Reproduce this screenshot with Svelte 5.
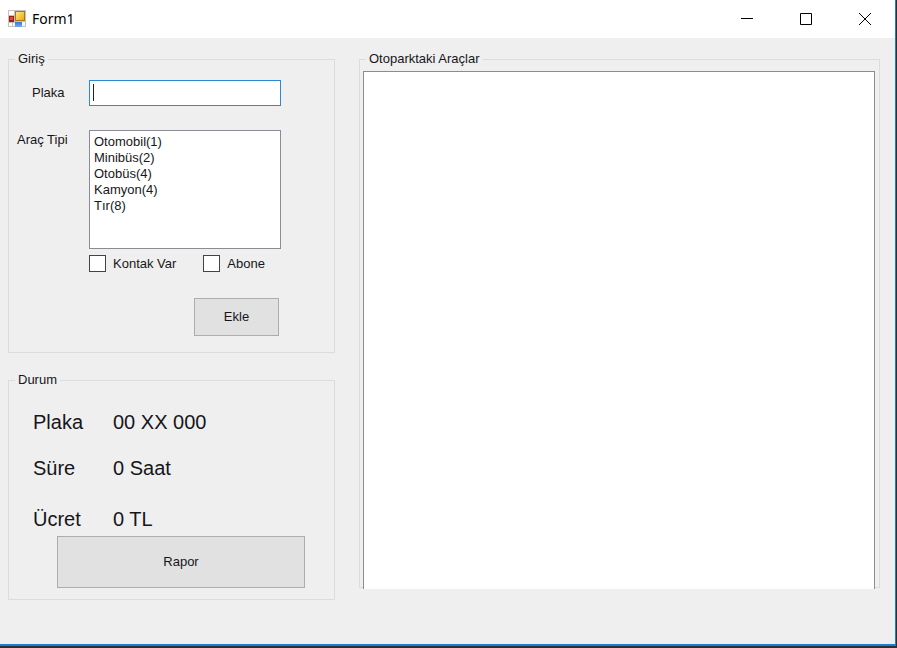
<script>
  const vehicleTypes = ['Otomobil(1)', 'Minibüs(2)', 'Otobüs(4)', 'Kamyon(4)', 'Tır(8)'];
  const status = [
    { name: 'Plaka', value: '00 XX 000' },
    { name: 'Süre', value: '0 Saat' },
    { name: 'Ücret', value: '0 TL' }
  ];
  let plate = $state('');
  let ignition = $state(false);
  let subscriber = $state(false);
</script>

<div class="window">
  <header>
    <svg class="logo" viewBox="0 0 18 18" aria-hidden="true">
      <defs>
        <linearGradient id="gold" x1="0" y1="0" x2="1" y2="1">
          <stop offset="0" stop-color="#ffe58a" />
          <stop offset="1" stop-color="#efac00" />
        </linearGradient>
        <linearGradient id="blue" x1="0" y1="0" x2="0" y2="1">
          <stop offset="0" stop-color="#3c74d8" />
          <stop offset="1" stop-color="#79a9f5" />
        </linearGradient>
      </defs>
      <rect x="0" y="0" width="18" height="17" fill="#c6c3be" />
      <rect x="1" y="1" width="5" height="4" fill="#fff" />
      <rect x="1" y="13" width="3" height="3" fill="#fff" />
      <rect x="5" y="13" width="2" height="3" fill="#f5f5f5" />
      <rect x="14" y="12" width="3" height="4" fill="#f5f5f5" />
      <rect x="7" y="1" width="10" height="10" fill="#a67b17" />
      <rect x="8" y="2" width="8" height="8" fill="url(#gold)" />
      <rect x="1" y="6" width="5" height="6" fill="#9d1f18" />
      <rect x="2" y="7" width="3" height="3" fill="#e0473b" />
      <rect x="7" y="12" width="7" height="5" fill="url(#blue)" />
    </svg>
    <h1>Form1</h1>
    <div class="controls">
      <button type="button" aria-label="Simge durumuna küçült">
        <svg viewBox="0 0 14 14"><path d="M1 6.5h12" /></svg>
      </button>
      <button type="button" aria-label="Ekranı kapla">
        <svg viewBox="0 0 14 14"><path d="M1.5 1.5h11v11h-11z" /></svg>
      </button>
      <button type="button" aria-label="Kapat">
        <svg viewBox="0 0 14 14"><path d="M1 1l12 12M13 1L1 13" /></svg>
      </button>
    </div>
  </header>

  <main>
    <div class="side">
      <fieldset class="entry">
        <legend>Giriş</legend>
        <div class="row plate">
          <label for="plate">Plaka</label>
          <div class="field">
            <input id="plate" type="text" bind:value={plate} autocomplete="off" />
            {#if !plate}<span class="caret"></span>{/if}
          </div>
        </div>
        <div class="row">
          <label for="type">Araç Tipi</label>
          <select id="type" size="7">
            {#each vehicleTypes as type}
              <option>{type}</option>
            {/each}
          </select>
        </div>
        <div class="checks">
          <label><input type="checkbox" bind:checked={ignition} />Kontak Var</label>
          <label><input type="checkbox" bind:checked={subscriber} />Abone</label>
        </div>
        <button class="push add" type="button">Ekle</button>
      </fieldset>

      <fieldset class="status">
        <legend>Durum</legend>
        <dl>
          {#each status as item}
            <div>
              <dt>{item.name}</dt>
              <dd>{item.value}</dd>
            </div>
          {/each}
        </dl>
        <button class="push report" type="button">Rapor</button>
      </fieldset>
    </div>

    <fieldset class="parked">
      <legend>Otoparktaki Araçlar</legend>
      <select size="20" aria-label="Otoparktaki Araçlar"></select>
    </fieldset>
  </main>
</div>

<style>
  :global(body) {
    margin: 0;
    background: #2b2f36;
  }

  .window,
  .window * {
    box-sizing: border-box;
  }

  .window {
    display: flex;
    flex-direction: column;
    min-height: calc(100vh - 2px);
    margin-right: 1px;
    border: solid #1a7fd0;
    border-width: 0 1px 2px 0;
    background: #efefef;
    color: #16161a;
    font: 13px/16px 'Liberation Sans', Arial, sans-serif;
  }

  header {
    display: flex;
    align-items: center;
    height: 38px;
    padding: 0 1px 0 8px;
    background: #fff;
  }

  .logo {
    width: 18px;
    height: 18px;
  }

  h1 {
    margin: 0 auto 0 6px;
    color: #000;
    font: 14px/20px 'Noto Sans', 'Open Sans', sans-serif;
  }

  .controls {
    display: flex;
    height: 100%;
  }

  .controls button {
    display: grid;
    place-items: center;
    width: 59px;
    padding: 0;
    border: 0;
    background: none;
  }

  .controls svg {
    width: 14px;
    height: 14px;
    fill: none;
    stroke: #000;
  }

  main {
    display: grid;
    flex: 1;
    grid-template-columns: 327px minmax(0, 1fr);
    gap: 24px;
    padding: 13px 15px 44px 8px;
  }

  .side {
    display: flex;
    flex-direction: column;
    gap: 19px;
  }

  fieldset {
    display: flex;
    flex-direction: column;
    min-width: 0;
    margin: 0;
    padding: 0;
    border: 1px solid #dcdcdc;
  }

  legend {
    margin-left: 6px;
    padding: 0 3px;
  }

  .entry {
    padding: 13px 0 16px;
  }

  .row {
    display: grid;
    grid-template-columns: 72px 192px;
    padding-left: 8px;
  }

  .row label {
    padding-top: 2px;
  }

  .plate {
    align-items: center;
    margin-bottom: 24px;
  }

  .plate label {
    padding: 0 0 0 15px;
  }

  .field {
    position: relative;
    display: flex;
  }

  .field input {
    width: 100%;
    height: 26px;
    padding: 0 4px;
    border: 1px solid #2a8ad8;
    border-radius: 0;
    outline: 0;
    background: #fff;
    font: inherit;
  }

  .caret {
    position: absolute;
    top: 4px;
    left: 4px;
    width: 1px;
    height: 17px;
    background: #222;
    pointer-events: none;
  }

  .field input:focus + .caret {
    display: none;
  }

  select {
    appearance: none;
    border: 1px solid #898c95;
    border-radius: 0;
    outline: 0;
    background: #fff;
    color: inherit;
    font: inherit;
  }

  .row select {
    height: 119px;
    padding: 3px 0;
    overflow: hidden;
  }

  option {
    min-height: 16px;
    padding: 0 4px;
    line-height: 16px;
  }

  .checks {
    display: flex;
    gap: 27px;
    margin-top: 6px;
    padding-left: 80px;
  }

  .checks label {
    display: flex;
    align-items: center;
    gap: 7px;
  }

  .checks input {
    appearance: none;
    width: 17px;
    height: 17px;
    margin: 0;
    border: 1px solid #444;
    background: #fff;
  }

  .checks input:checked {
    box-shadow: inset 0 0 0 3px #fff;
    background: #333;
  }

  .push {
    padding: 0;
    border: 1px solid #adadad;
    border-radius: 0;
    background: #e1e1e1;
    color: inherit;
    font: inherit;
  }

  .add {
    width: 85px;
    height: 38px;
    margin: 26px 0 0 185px;
  }

  .status {
    padding: 22px 0 11px;
  }

  dl {
    display: flex;
    flex-direction: column;
    margin: 0 0 5px 24px;
    font-size: 20px;
    line-height: 24px;
  }

  dl div {
    display: grid;
    grid-template-columns: 80px 1fr;
    margin-bottom: 22px;
  }

  dl div:nth-last-child(2) {
    margin-bottom: 27px;
  }

  dl div:last-child {
    margin-bottom: 0;
  }

  dd {
    margin: 0;
  }

  .report {
    width: 248px;
    height: 52px;
    margin-left: 48px;
  }

  .parked {
    margin-bottom: 12px;
  }

  .parked select {
    flex: 1;
    margin: 4px 4px -2px 3px;
    border-bottom: 0;
  }
</style>
